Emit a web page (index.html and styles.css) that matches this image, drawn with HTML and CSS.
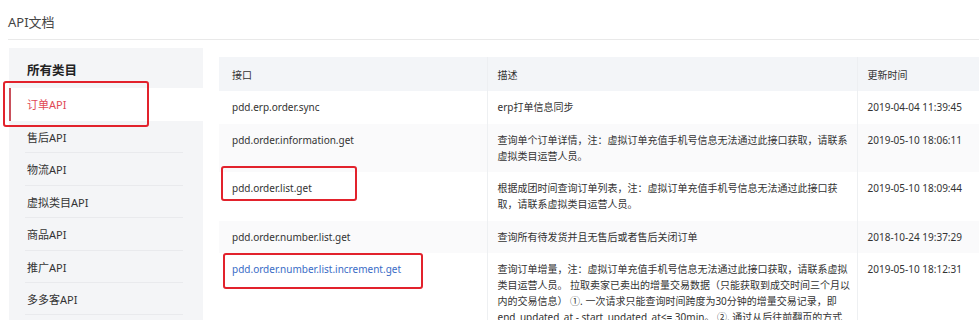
FILE: index.html
```html
<!DOCTYPE html>
<html lang="zh-CN">
<head>
<meta charset="utf-8">
<title>API文档</title>
<link rel="stylesheet" href="styles.css">
</head>
<body>
<div class="page">
  <div class="page-title">API文档</div>
  <div class="main">
    <aside class="sidebar">
      <div class="side-head"><span class="side-head-label">所有类目</span></div>
      <ul class="cat-list">
        <li class="cat active annot-side"><span class="cat-label">订单API</span></li>
        <li class="cat"><span class="cat-label">售后API</span></li>
        <li class="cat"><span class="cat-label">物流API</span></li>
        <li class="cat"><span class="cat-label">虚拟类目API</span></li>
        <li class="cat"><span class="cat-label">商品API</span></li>
        <li class="cat"><span class="cat-label">推广API</span></li>
        <li class="cat"><span class="cat-label">多多客API</span></li>
      </ul>
    </aside>
    <section class="content">
      <table class="api-table">
        <colgroup><col class="col-name"><col class="col-desc"><col class="col-time"></colgroup>
        <thead>
          <tr><th>接口</th><th>描述</th><th>更新时间</th></tr>
        </thead>
        <tbody>
          <tr>
            <td>pdd.erp.order.sync</td>
            <td>erp打单信息同步</td>
            <td>2019-04-04 11:39:45</td>
          </tr>
          <tr class="striped">
            <td>pdd.order.information.get</td>
            <td>查询单个订单详情，注：虚拟订单充值手机号信息无法通过此接口获取，请联系虚拟类目运营人员。</td>
            <td>2019-05-10 18:06:11</td>
          </tr>
          <tr>
            <td class="annot-a">pdd.order.list.get</td>
            <td>根据成团时间查询订单列表，注：虚拟订单充值手机号信息无法通过此接口获取，请联系虚拟类目运营人员。</td>
            <td>2019-05-10 18:09:44</td>
          </tr>
          <tr class="striped">
            <td>pdd.order.number.list.get</td>
            <td>查询所有待发货并且无售后或者售后关闭订单</td>
            <td>2018-10-24 19:37:29</td>
          </tr>
          <tr>
            <td class="annot-b"><a class="api-link" href="#">pdd.order.number.list.increment.get</a></td>
            <td>查询订单增量，注：虚拟订单充值手机号信息无法通过此接口获取，请联系虚拟类目运营人员。 拉取卖家已卖出的增量交易数据（只能获取到成交时间三个月以内的交易信息） ①. 一次请求只能查询时间跨度为30分钟的增量交易记录，即end_updated_at - start_updated_at&lt;= 30min。 ②. 通过从后往前翻页的方式</td>
            <td>2019-05-10 18:12:31</td>
          </tr>
        </tbody>
      </table>
    </section>
  </div>
</div>
</body>
</html>
```
FILE: styles.css
```css
html, body {
  margin: 0;
  padding: 0;
  background: #ffffff;
}
body {
  width: 979px;
  height: 320px;
  overflow: hidden;
  font-family: "Noto Sans", "Noto Sans CJK SC", sans-serif;
  color: #333333;
}
.page-title {
  margin-left: 8px;
  height: 39px;
  line-height: 44px;
  font-size: 13px;
  color: #444444;
  border-bottom: 1px solid #e9e9e9;
}
.main {
  display: flex;
  align-items: flex-start;
  margin-top: 8px;
}
.sidebar {
  width: 194px;
  flex: none;
  margin-left: 9px;
  min-height: 320px;
  background: #f4f5f7;
}
.side-head {
  height: 40px;
  padding-left: 14px;
}
.side-head-label {
  display: block;
  height: 40px;
  line-height: 45px;
  padding-left: 4px;
  font-size: 12.5px;
  font-weight: 700;
  color: #222222;
  border-bottom: 1px solid #e8e9ec;
}
.cat-list {
  list-style: none;
  margin: 0;
  padding: 0;
}
.cat {
  height: 32.4px;
  box-sizing: border-box;
  font-size: 11px;
  color: #333333;
}
.cat-label {
  display: block;
  height: 100%;
  box-sizing: border-box;
  margin: 0 20px 0 16px;
  padding-left: 2px;
  line-height: 33px;
  border-bottom: 1px solid #e9eaed;
}
.cat.active {
  height: 33px;
  background: #ffffff;
  border-left: 2px solid #c9505b;
  color: #e04a55;
}
.cat.active .cat-label {
  margin-left: 14px;
  border-bottom: none;
  line-height: 33px;
}
.annot-side {
  position: relative;
}
.annot-side::after,
.annot-a::after,
.annot-b::after {
  content: "";
  position: absolute;
  box-sizing: border-box;
  border: 2.5px solid #e2222c;
  border-radius: 3px;
  pointer-events: none;
}
.annot-side::after {
  left: -8px;
  top: -7px;
  width: 146px;
  height: 46px;
}
.content {
  margin-left: 16px;
  margin-top: 9px;
}
.api-table {
  table-layout: fixed;
  width: 778px;
  border-collapse: collapse;
  font-size: 10px;
  color: #333333;
}
.col-name { width: 268px; }
.col-desc { width: 370px; }
.col-time { width: 140px; }
.api-table th {
  height: 34px;
  padding: 0 10px;
  text-align: left;
  font-weight: 400;
  background: #f3f5f8;
  border-right: 1px solid #edeff2;
}
.api-table th:first-child {
  padding-left: 13px;
}
.api-table td {
  padding: 8.25px 4px 8.25px 10px;
  line-height: 16px;
  vertical-align: top;
  border-right: 1px solid #eef0f2;
  background: #ffffff;
}
.api-table td:first-child {
  padding-left: 13px;
}
.api-table tr.striped td {
  background: #fafafb;
}
.annot-a,
.annot-b {
  position: relative;
}
.annot-a::after {
  left: 2px;
  top: -6px;
  width: 136px;
  height: 35px;
}
.annot-b::after {
  left: 4px;
  top: 0;
  width: 200px;
  height: 36px;
}
.api-link {
  color: #3a6cc6;
  text-decoration: none;
}
```
